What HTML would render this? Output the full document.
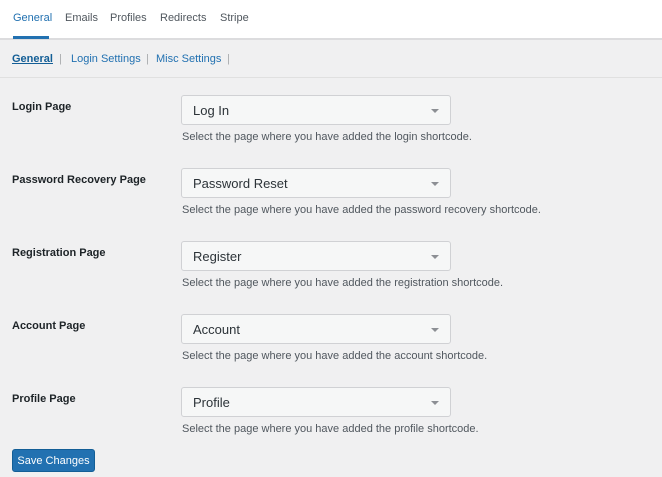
<!DOCTYPE html><html><head><style>
body{margin:0;width:662px;height:477px;background:#f0f0f1;font-family:"Liberation Sans",sans-serif;position:relative;overflow:hidden}
.top{position:absolute;left:0;top:0;width:662px;height:38px;background:#fff;border-bottom:2px solid #dcdcde}
.tab{position:absolute;top:12px;font-size:11px;color:#50575e}
.sub{position:absolute;top:40px;left:0;width:662px;height:37px;border-bottom:1px solid #e0e0e0}
.sl{position:absolute;top:53px;font-size:11px;color:#2271b1}
.sp{position:absolute;top:53px;font-size:11px;color:#a7aaad}
.lab{position:absolute;left:12px;font-size:11px;font-weight:bold;color:#1d2327}
.sel{position:absolute;left:181px;width:268px;height:28px;border:1px solid #d0d1d4;border-radius:3px;background:#f6f7f7;font-size:13px;color:#2c3338;line-height:29px;box-sizing:content-box}
.sel span{position:absolute;left:11px}
.sel i{position:absolute;right:11px;top:13px;border-left:4px solid transparent;border-right:4px solid transparent;border-top:4px solid #8c8f94}
.d{position:absolute;left:182px;font-size:11px;color:#50575e}
.btn{position:absolute;left:12px;top:449px;width:83px;height:23px;background:#2271b1;border:1px solid #135e96;border-radius:3px;color:#fff;font-size:11px;line-height:23px;text-align:center;box-sizing:border-box}
</style></head><body>
<div class="top"></div>
<div class="tab" style="left:13px;color:#2271b1">General</div>
<div style="position:absolute;left:13px;top:36px;width:36px;height:3px;background:#2271b1"></div>
<div class="tab" style="left:65px">Emails</div>
<div class="tab" style="left:110px">Profiles</div>
<div class="tab" style="left:160px">Redirects</div>
<div class="tab" style="left:220px">Stripe</div>
<div class="sub"></div>
<div class="sl" style="left:12px;color:#135e96;font-weight:bold;text-decoration:underline">General</div>
<div class="sp" style="left:59px">|</div>
<div class="sl" style="left:71px">Login Settings</div>
<div class="sp" style="left:146px">|</div>
<div class="sl" style="left:156px">Misc Settings</div>
<div class="sp" style="left:227px">|</div>

<div class="lab" style="top:101px">Login Page</div>
<div class="sel" style="top:95px"><span>Log In</span><i></i></div>
<div class="d" style="top:131px">Select the page where you have added the login shortcode.</div>

<div class="lab" style="top:174px">Password Recovery Page</div>
<div class="sel" style="top:168px"><span>Password Reset</span><i></i></div>
<div class="d" style="top:204px">Select the page where you have added the password recovery shortcode.</div>

<div class="lab" style="top:247px">Registration Page</div>
<div class="sel" style="top:241px"><span>Register</span><i></i></div>
<div class="d" style="top:277px">Select the page where you have added the registration shortcode.</div>

<div class="lab" style="top:320px">Account Page</div>
<div class="sel" style="top:314px"><span>Account</span><i></i></div>
<div class="d" style="top:350px">Select the page where you have added the account shortcode.</div>

<div class="lab" style="top:393px">Profile Page</div>
<div class="sel" style="top:387px"><span>Profile</span><i></i></div>
<div class="d" style="top:423px">Select the page where you have added the profile shortcode.</div>

<div class="btn">Save Changes</div>
</body></html>
